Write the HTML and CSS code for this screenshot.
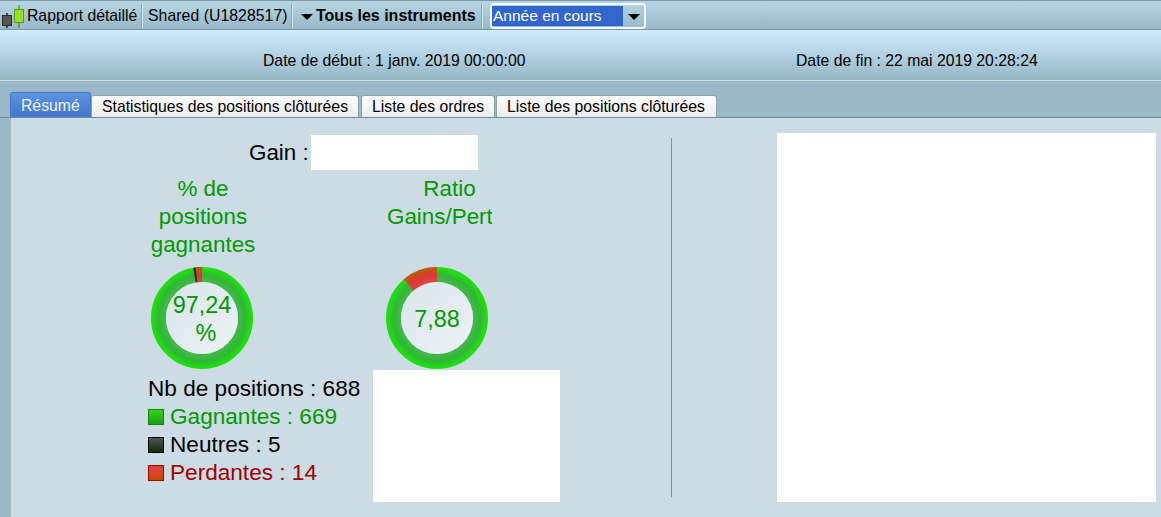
FILE: index.html
```html
<!DOCTYPE html>
<html lang="fr">
<head>
<meta charset="utf-8">
<title>Rapport détaillé</title>
<link rel="stylesheet" href="styles.css">
</head>
<body>
<svg class="defs" width="0" height="0" aria-hidden="true">
  <defs>
    <radialGradient id="gGreen" gradientUnits="userSpaceOnUse" cx="51" cy="51" r="51">
      <stop offset="0.7" stop-color="#45b84c"/>
      <stop offset="0.85" stop-color="#2fb735"/>
      <stop offset="0.93" stop-color="#22d518"/>
      <stop offset="1" stop-color="#20e010"/>
    </radialGradient>
    <radialGradient id="gRed" gradientUnits="userSpaceOnUse" cx="51" cy="51" r="51">
      <stop offset="0.7" stop-color="#e43f45"/>
      <stop offset="0.86" stop-color="#dc3a30"/>
      <stop offset="0.95" stop-color="#c9500f"/>
      <stop offset="1" stop-color="#c45a0c"/>
    </radialGradient>
    <linearGradient id="gDisc" x1="0" y1="0" x2="1" y2="1">
      <stop offset="0" stop-color="#d8e4ec"/>
      <stop offset="1" stop-color="#edf3f6"/>
    </linearGradient>
  </defs>
</svg>
<header class="toolbar">
  <svg class="logo" width="25" height="24" viewBox="0 0 25 24">
    <path d="M6 8v15" stroke="#222" stroke-width="1.5" fill="none"/>
    <rect x="1.5" y="10.5" width="9" height="10" fill="#555" stroke="#2a2a2a"/>
    <path d="M18 0v23" stroke="#5a9a10" stroke-width="1.5" fill="none"/>
    <rect x="13.5" y="4.5" width="9" height="13" fill="#95e024" stroke="#5a9a10"/>
  </svg>
  <span class="tool tool-first">Rapport détaillé</span>
  <span class="sep"></span>
  <span class="tool tool-shared">Shared (U1828517)</span>
  <span class="sep"></span>
  <span class="caret"></span>
  <strong class="tool-bold">Tous les instruments</strong>
  <span class="sep sep-last"></span>
  <div class="select">
    <span class="select-value">Année en cours</span>
    <span class="select-arrow"><span class="caret caret-select"></span></span>
  </div>
</header>
<section class="dates">
  <span class="date date-start">Date de début : 1 janv. 2019 00:00:00</span>
  <span class="date">Date de fin : 22 mai 2019 20:28:24</span>
</section>
<nav class="tabs">
  <span class="tab tab-active">Résumé</span>
  <span class="tab">Statistiques des positions clôturées</span>
  <span class="tab">Liste des ordres</span>
  <span class="tab tab-last">Liste des positions clôturées</span>
</nav>
<main class="content">
  <div class="left">
    <div class="gain">
      <span class="gain-label">Gain :</span>
      <span class="mask mask-gain"></span>
    </div>
    <div class="gauges">
      <div class="gauge-col gauge-col-a">
        <div class="gauge-title gauge-title-a">% de positions gagnantes</div>
        <div class="gauge gauge-a">
          <svg width="102" height="102" viewBox="0 0 102 102">
            <circle class="ring" cx="51" cy="51" r="43.5"/>
            <circle class="seg seg-neutral" cx="51" cy="51" r="43.5" pathLength="100" stroke-dasharray="2.76 97.24" transform="rotate(-99.94 51 51)"/>
            <circle class="seg seg-red" cx="51" cy="51" r="43.5" pathLength="100" stroke-dasharray="2.03 97.97" transform="rotate(-97.3 51 51)"/>
            <circle class="disc" cx="51" cy="51" r="36"/>
          </svg>
          <div class="gauge-value">97,24 <span class="gauge-unit">%</span></div>
        </div>
      </div>
      <div class="gauge-col gauge-col-b">
        <div class="gauge-title gauge-title-b">Ratio Gains/Pertes</div>
        <div class="gauge">
          <svg width="102" height="102" viewBox="0 0 102 102">
            <circle class="ring" cx="51" cy="51" r="43.5"/>
            <circle class="seg seg-red" cx="51" cy="51" r="43.5" pathLength="100" stroke-dasharray="11.26 88.74" transform="rotate(-130.5 51 51)"/>
            <circle class="disc" cx="51" cy="51" r="36"/>
          </svg>
          <div class="gauge-value">7,88</div>
        </div>
      </div>
    </div>
    <div class="summary">
      <div class="stats">
        <div>Nb de positions : 688</div>
        <div class="stat stat-win"><span class="swatch swatch-win"></span>Gagnantes : 669</div>
        <div class="stat"><span class="swatch swatch-neutral"></span>Neutres : 5</div>
        <div class="stat stat-loss"><span class="swatch swatch-loss"></span>Perdantes : 14</div>
      </div>
      <div class="mask mask-summary"></div>
    </div>
  </div>
  <div class="divider"></div>
  <div class="mask mask-right"></div>
</main>
</body>
</html>
```
FILE: styles.css
```css
html, body { margin: 0; padding: 0; }
body {
  width: 1161px;
  height: 517px;
  overflow: hidden;
  background: #9bb8c8;
  font-family: "Liberation Sans", Arial, sans-serif;
  font-size: 15.75px;
  color: #000;
  display: flex;
  flex-direction: column;
}
.defs { display: block; height: 0; }

.toolbar {
  height: 29px;
  box-sizing: border-box;
  border-top: 1px solid #7d95a5;
  padding-top: 1px;
  background: linear-gradient(#b6d6e5, #98b7c7);
  display: flex;
  align-items: center;
  flex: none;
}
.logo { margin-left: 1px; margin-top: 2px; flex: none; }
.tool { white-space: nowrap; }
.tool-first { margin-left: 1px; width: 110px; flex: none; }
.tool-shared { width: 139px; flex: none; letter-spacing: 0.07px; }
.tool-bold { font-size: 16px; font-weight: 700; white-space: nowrap; margin-left: 3px; width: 159px; flex: none; }
.sep {
  width: 1px;
  height: 24px;
  background: #d5e3ea;
  box-shadow: -1px 0 0 #8aa4b3;
  margin: 0 5px;
  flex: none;
}
.sep-last { margin: 0 7px; }
.caret {
  width: 0;
  height: 0;
  border-left: 6px solid transparent;
  border-right: 6px solid transparent;
  border-top: 6px solid #000;
  margin-left: 3px;
  margin-top: 2px;
  flex: none;
}
.select {
  width: 156px;
  height: 26px;
  box-sizing: border-box;
  border: 2px solid #f4f8fa;
  border-radius: 4px;
  padding: 1px 0;
  display: flex;
  flex: none;
}
.select-value {
  width: 131px;
  background: #3366cc;
  color: #fff;
  font-size: 15.5px;
  line-height: 20px;
  padding-left: 1px;
  box-sizing: border-box;
}
.select-arrow {
  flex: 1;
  display: flex;
  align-items: center;
  justify-content: center;
}
.caret-select { margin: 2px 0 0; }

.dates {
  height: 52px;
  box-sizing: border-box;
  border-top: 1px solid #7d95a5;
  border-bottom: 1px solid #d0dfe7;
  background: linear-gradient(#cfecfe, #96b6c6);
  display: flex;
  align-items: center;
  padding: 11px 0 0 263px;
  flex: none;
}
.date { white-space: nowrap; }
.date-start { width: 533px; flex: none; }

.tabs {
  height: 37px;
  box-sizing: border-box;
  border-bottom: 1px solid #708a98;
  padding-left: 10px;
  display: flex;
  align-items: flex-end;
  gap: 2px;
  flex: none;
}
.tab {
  height: 21px;
  line-height: 21px;
  padding: 0 10px;
  background: linear-gradient(#ffffff, #ececec);
  border: 1px solid #8fa3af;
  border-bottom: 0;
  border-radius: 3px 3px 0 0;
  white-space: nowrap;
}
.tab-last { margin-left: -1px; padding-right: 11px; }
.tab-active {
  height: 22px;
  line-height: 22px;
  padding-top: 2px;
  width: 59px;
  background: linear-gradient(#5c93e2, #4476cc);
  color: #eef4fc;
  border-color: #4476cc;
  margin-right: -2px;
}

.content {
  flex: 1;
  margin-left: 10px;
  background: #cddce4;
  border-left: 1px solid #a5b9c5;
  display: flex;
  align-items: flex-start;
  font-size: 22.4px;
  min-height: 0;
}
.mask { background: #fff; display: block; }

.left { width: 660px; flex: none; }
.gain {
  margin-top: 17px;
  padding-left: 238px;
  display: flex;
  align-items: center;
}
.gain-label { width: 62px; white-space: nowrap; flex: none; }
.mask-gain { width: 167px; height: 35px; }

.gauges {
  display: flex;
  margin-top: 5px;
  padding-left: 137px;
}
.gauge-col-a { width: 111px; flex: none; }
.gauge-col-b { width: 106px; flex: none; margin-left: 127px; overflow: hidden; }
.gauge-title {
  height: 84px;
  line-height: 28px;
  color: #009900;
  text-align: center;
  margin-bottom: 8px;
}
.gauge-title-a { padding-right: 1px; }
.gauge-title-b { width: 125px; margin-left: 1px; }
.gauge {
  width: 102px;
  height: 102px;
  display: grid;
}
.gauge-a { margin-left: 3px; }
.gauge > svg, .gauge-value { grid-area: 1 / 1; }
.gauge > svg { display: block; }
.gauge-value {
  align-self: center;
  justify-self: center;
  width: 72px;
  padding-top: 1px;
  text-align: center;
  font-size: 23.4px;
  line-height: 28px;
  color: #009900;
}
.gauge-unit { display: inline-block; padding-left: 8px; }
.ring { fill: none; stroke: url(#gGreen); stroke-width: 15; }
.seg { fill: none; stroke-width: 15; }
.seg-red { stroke: url(#gRed); }
.seg-neutral { stroke: #2a2a24; }
.disc { fill: url(#gDisc); }

.summary {
  display: flex;
  margin-top: 1px;
  padding-left: 137px;
}
.stats {
  width: 225px;
  flex: none;
  padding-top: 5px;
  font-size: 22.6px;
  line-height: 28px;
  white-space: nowrap;
}
.stat { display: flex; align-items: center; }
.stat-win { color: #009900; }
.stat-loss { color: #a00000; }
.swatch {
  width: 14px;
  height: 14px;
  border: 1px solid #000;
  margin-right: 6px;
  margin-top: -1px;
  flex: none;
}
.swatch-win { background: linear-gradient(#2ed41c, #1ea014); border-color: #118a0a; }
.swatch-neutral { background: linear-gradient(#555, #0f2a05); border-color: #000; }
.swatch-loss { background: linear-gradient(#e8404a, #c24a08); border-color: #a00000; }
.mask-summary { width: 187px; height: 132px; }

.divider {
  width: 1px;
  height: 359px;
  background: #7f8f98;
  margin-top: 20px;
  flex: none;
}
.mask-right {
  width: 379px;
  height: 369px;
  margin: 15px 0 0 105px;
  flex: none;
}
```
